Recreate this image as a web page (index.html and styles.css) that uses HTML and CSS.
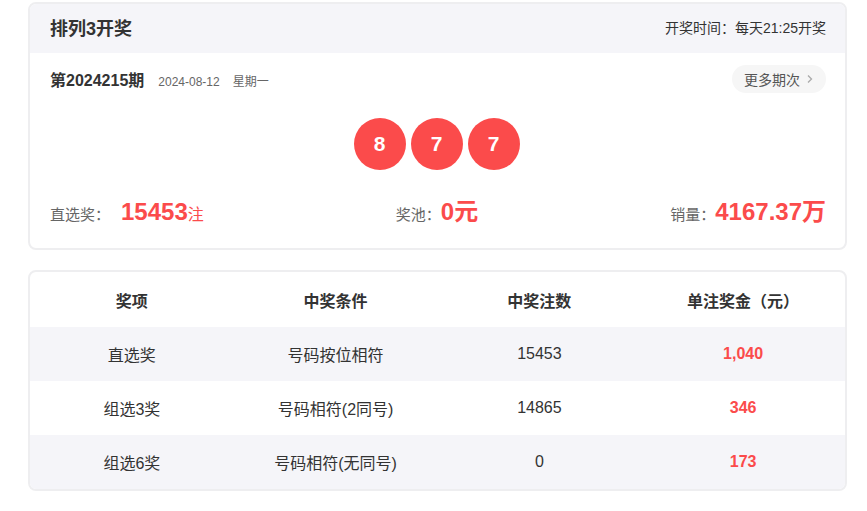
FILE: index.html
```html
<!DOCTYPE html>
<html lang="zh">
<head>
<meta charset="utf-8">
<title>排列3开奖</title>
<link rel="stylesheet" href="styles.css">
</head>
<body>
<div class="page">
  <section class="card draw">
    <header class="card-head">
      <h2 class="title">排列3开奖</h2>
      <span class="time">开奖时间：每天21:25开奖</span>
    </header>
    <div class="issue-row">
      <div class="issue">
        <span class="issue-no">第2024215期</span>
        <span class="issue-date">2024-08-12</span>
        <span class="issue-week">星期一</span>
      </div>
      <a class="more">更多期次<svg class="chev" width="8" height="10" viewBox="0 0 8 10"><path d="M2 1.5 L5.5 5 L2 8.5" fill="none" stroke="#aaa" stroke-width="1.3"/></svg></a>
    </div>
    <div class="balls">
      <span class="ball">8</span>
      <span class="ball">7</span>
      <span class="ball">7</span>
    </div>
    <div class="stats">
      <div class="stat"><span class="lbl">直选奖：</span><span class="val gap">15453</span><span class="unit">注</span></div>
      <div class="stat"><span class="lbl">奖池：</span><span class="val">0</span><span class="unit big">元</span></div>
      <div class="stat"><span class="lbl">销量：</span><span class="val">4167.37</span><span class="unit big">万</span></div>
    </div>
  </section>

  <section class="card prize">
    <div class="row head">
      <div>奖项</div><div>中奖条件</div><div>中奖注数</div><div>单注奖金（元）</div>
    </div>
    <div class="row odd">
      <div>直选奖</div><div>号码按位相符</div><div>15453</div><div class="money">1,040</div>
    </div>
    <div class="row">
      <div>组选3奖</div><div>号码相符(2同号)</div><div>14865</div><div class="money">346</div>
    </div>
    <div class="row odd">
      <div>组选6奖</div><div>号码相符(无同号)</div><div>0</div><div class="money">173</div>
    </div>
  </section>
</div>
</body>
</html>
```
FILE: styles.css
```css
* { box-sizing: border-box; }
body {
  margin: 0;
  background: #fff;
  font-family: "Liberation Sans", Arial, "Noto Sans CJK SC", sans-serif;
  color: #333;
}
.page {
  padding: 2px 20px 0 28px;
  display: flex;
  flex-direction: column;
  gap: 20px;
}
.card {
  border: 2px solid #eeeef0;
  border-radius: 8px;
  overflow: hidden;
  background: #fff;
}
.card-head {
  height: 49px;
  background: #f5f5f9;
  display: flex;
  align-items: center;
  justify-content: space-between;
  padding: 0 19px 3px 20px;
}
.title {
  margin: 0;
  font-size: 18px;
  font-weight: bold;
  color: #333;
}
.time {
  font-size: 14px;
  color: #333;
}
.issue-row {
  display: flex;
  justify-content: space-between;
  align-items: center;
  padding: 11px 19px 0 20px;
  height: 41px;
}
.issue { display: flex; align-items: baseline; }
.issue-no { font-size: 16px; font-weight: bold; color: #333; }
.issue-date { font-size: 12px; color: #666; margin-left: 14px; }
.issue-week { font-size: 12px; color: #666; margin-left: 13px; }
.more {
  display: flex;
  align-items: center;
  gap: 6px;
  height: 28px;
  padding: 0 12px 0 12px;
  border-radius: 14px;
  background: #f6f6f6;
  font-size: 14px;
  color: #555;
}
.balls {
  display: flex;
  justify-content: center;
  gap: 5px;
  margin-top: 24px;
  padding-right: 2px;
}
.ball {
  width: 52px;
  height: 52px;
  border-radius: 50%;
  background: #fb4b4b;
  color: #fff;
  font-size: 21px;
  font-weight: bold;
  display: flex;
  align-items: center;
  justify-content: center;
}
.stats {
  display: flex;
  justify-content: space-between;
  align-items: baseline;
  padding: 0 19px 0 20px;
  margin-top: 22px;
  height: 56px;
}
.stat { display: flex; align-items: baseline; }
.lbl { font-size: 15px; color: #666; }
.val { font-size: 24px; font-weight: bold; color: #fb4b4b; }
.val.gap { margin-left: 11px; }
.unit { font-size: 16px; color: #fb4b4b; }
.unit.big { font-size: 24px; font-weight: bold; }
.row {
  display: grid;
  grid-template-columns: repeat(4, 1fr);
  height: 54px;
  align-items: center;
  text-align: center;
  font-size: 16px;
  color: #333;
}
.row.head { height: 55px; font-weight: bold; font-size: 16px; }
.row.odd { background: #f5f5f9; }
.money { color: #fb4b4b; font-weight: bold; font-size: 16px; }
```
